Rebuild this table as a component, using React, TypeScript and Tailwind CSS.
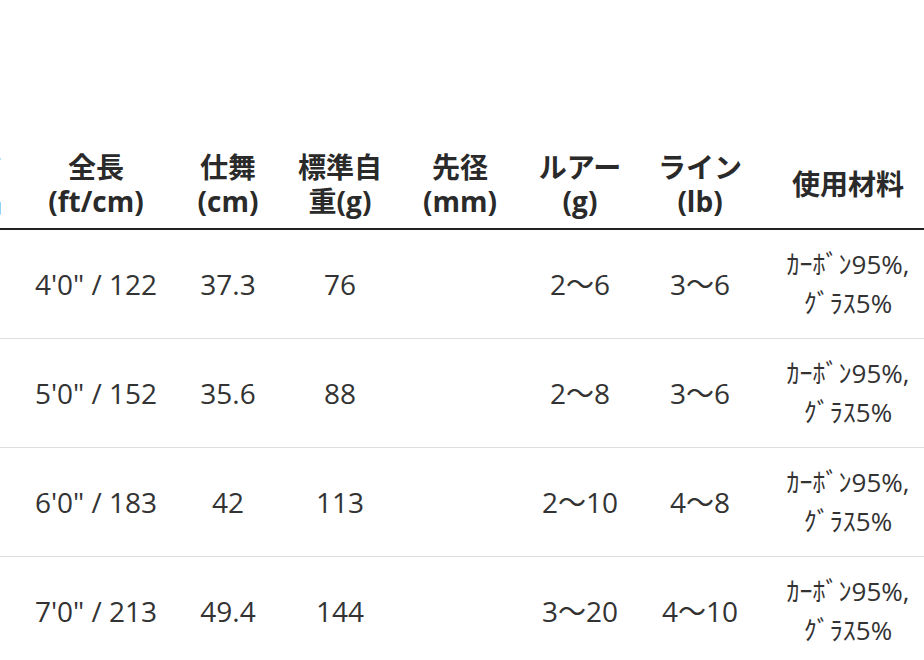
const headers: { lines: string[]; w: string }[] = [
  { lines: ['ロッド', '品番名'], w: 'w-[110px]' },
  { lines: ['全長', '(ft/cm)'], w: 'w-[160px]' },
  { lines: ['仕舞', '(cm)'], w: 'w-[104px]' },
  { lines: ['標準自', '重(g)'], w: 'w-[120px]' },
  { lines: ['先径', '(mm)'], w: 'w-[120px]' },
  { lines: ['ルアー', '(g)'], w: 'w-[120px]' },
  { lines: ['ライン', '(lb)'], w: 'w-[120px]' },
  { lines: ['使用材料'], w: 'w-[176px]' },
];

const rows = [
  ['', '4\'0" / 122', '37.3', '76', '', '2〜6', '3〜6'],
  ['', '5\'0" / 152', '35.6', '88', '', '2〜8', '3〜6'],
  ['', '6\'0" / 183', '42', '113', '', '2〜10', '4〜8'],
  ['', '7\'0" / 213', '49.4', '144', '', '3〜20', '4〜10'],
];

export default function App() {
  return (
    <div
      className="w-[924px] h-[660px] overflow-hidden bg-white pt-[140px] text-[#333]"
      style={{ fontFamily: '"Open Sans", "Noto Sans CJK JP", sans-serif' }}
    >
      <table className="ml-[-94px] table-fixed border-separate border-spacing-0 w-[1030px]">
        <thead>
          <tr>
            {headers.map((h, i) => (
              <th
                key={i}
                className={`${h.w} py-[10px] px-0 text-center align-middle text-[28px] leading-[34px] font-bold text-[#2a2a2a] border-b-2 border-[#222] whitespace-nowrap`}
              >
                {h.lines.length > 1 ? (
                  <>
                    {h.lines[0]}
                    <br />
                    {h.lines[1]}
                  </>
                ) : (
                  h.lines[0]
                )}
              </th>
            ))}
          </tr>
        </thead>
        <tbody>
          {rows.map((r, i) => (
            <tr key={i}>
              {r.map((c, j) => (
                <td
                  key={j}
                  className="py-[15px] px-0 text-center align-middle text-[28px] leading-[34px] border-b border-[#ddd] whitespace-nowrap"
                >
                  {c}
                </td>
              ))}
              <td className="py-[15px] px-0 text-center align-middle text-[26px] leading-[39px] border-b border-[#ddd] whitespace-nowrap">
                ｶｰﾎﾞﾝ95%,
                <br />
                ｸﾞﾗｽ5%
              </td>
            </tr>
          ))}
        </tbody>
      </table>
    </div>
  );
}
